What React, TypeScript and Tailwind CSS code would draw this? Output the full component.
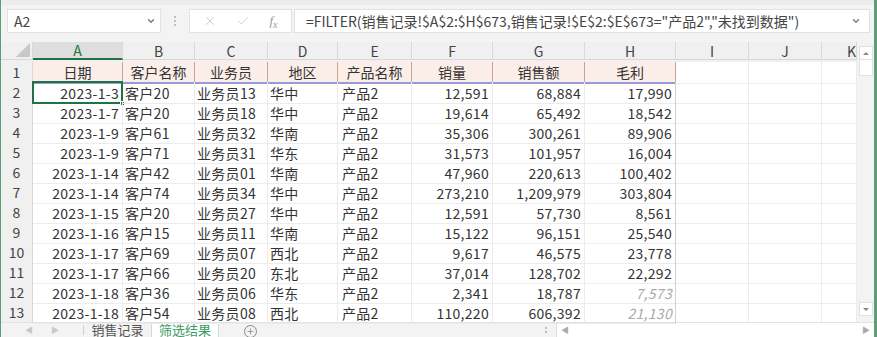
import { ChevronDown, X, Check, Plus } from "lucide-react";

type Row = [string, string, string, string, string, string, string, string];

const rows: Row[] = [
  ["2023-1-3", "客户20", "业务员13", "华中", "产品2", "12,591", "68,884", "17,990"],
  ["2023-1-7", "客户20", "业务员18", "华中", "产品2", "19,614", "65,492", "18,542"],
  ["2023-1-9", "客户61", "业务员32", "华南", "产品2", "35,306", "300,261", "89,906"],
  ["2023-1-9", "客户71", "业务员31", "华东", "产品2", "31,573", "101,957", "16,004"],
  ["2023-1-14", "客户42", "业务员01", "华南", "产品2", "47,960", "220,613", "100,402"],
  ["2023-1-14", "客户74", "业务员34", "华中", "产品2", "273,210", "1,209,979", "303,804"],
  ["2023-1-15", "客户20", "业务员27", "华中", "产品2", "12,591", "57,730", "8,561"],
  ["2023-1-16", "客户15", "业务员11", "华南", "产品2", "15,122", "96,151", "25,540"],
  ["2023-1-17", "客户69", "业务员07", "西北", "产品2", "9,617", "46,575", "23,778"],
  ["2023-1-17", "客户66", "业务员20", "东北", "产品2", "37,014", "128,702", "22,292"],
  ["2023-1-18", "客户36", "业务员06", "华东", "产品2", "2,341", "18,787", "7,573"],
  ["2023-1-18", "客户54", "业务员08", "西北", "产品2", "110,220", "606,392", "21,130"],
];

const headers = ["日期", "客户名称", "业务员", "地区", "产品名称", "销量", "销售额", "毛利"];
const letters = ["A", "B", "C", "D", "E", "F", "G", "H", "I", "J", "K"];
// alignment per data column
const align = ["text-right pr-[3px]", "pl-[2px]", "pl-[2px]", "pl-[2px]", "pl-[4px]", "text-right pr-[3px]", "text-right pr-[3px]", "text-right pr-[3px]"];

const cols = "grid-cols-[32px_90px_72px_73px_70px_74px_81px_92px_91px_73px_73px_35px]";

export default function App() {
  return (
    <div
      className="w-[877px] h-[337px] overflow-hidden bg-white border-l border-r-[3px] border-[#5a9e78] flex flex-col text-[#333]"
      style={{ fontFamily: '"Noto Sans CJK SC", "Noto Sans", sans-serif' }}
    >
      {/* formula bar */}
      <div className="h-[42px] shrink-0 bg-[#f3f3f3] border-t-[5px] border-[#ececec] flex items-start pt-[4px] pl-[6px] pr-[4px]">
        <div className="w-[154px] h-[24px] bg-white border border-[#e2e2e2] flex items-center justify-between pl-[6px] pr-[4px]">
          <span className="text-[14px] text-[#444]">A2</span>
          <ChevronDown className="w-[10px] h-[10px] text-[#777]" strokeWidth={3} />
        </div>
        <div className="w-[28px] h-[24px] flex flex-col items-center justify-center gap-[2px]">
          <span className="w-[2px] h-[2px] bg-[#b0b0b0] rounded-full"></span>
          <span className="w-[2px] h-[2px] bg-[#b0b0b0] rounded-full"></span>
          <span className="w-[2px] h-[2px] bg-[#b0b0b0] rounded-full"></span>
        </div>
        <div className="w-[103px] h-[24px] bg-white border border-[#e2e2e2] flex items-center justify-around px-[4px]">
          <X className="w-[14px] h-[14px] text-[#c8c8c8]" strokeWidth={1.5} />
          <Check className="w-[14px] h-[14px] text-[#c8c8c8]" strokeWidth={1.5} />
          <span className="text-[13px] italic text-[#999]" style={{ fontFamily: '"Liberation Serif", serif' }}>
            f<sub className="text-[10px]">x</sub>
          </span>
        </div>
        <div className="flex-1 h-[24px] ml-[2px] bg-white border border-[#e2e2e2] flex items-center justify-between pl-[11px] pr-[8px]">
          <span className="text-[14px] text-[#444] whitespace-nowrap">
            =FILTER(销售记录!$A$2:$H$673,销售记录!$E$2:$E$673="产品2","未找到数据")
          </span>
          <ChevronDown className="w-[10px] h-[10px] text-[#777]" strokeWidth={3} />
        </div>
      </div>

      {/* sheet */}
      <div className="flex h-[280px] shrink-0">
        <div className="w-[856px] flex flex-col">
          {/* column letters */}
          <div className={`grid ${cols} h-[20px] bg-[#f0f0f0] text-[14px] text-[#444]`}>
            <div className="relative border-r border-b border-[#d8d8d8]">
              <div className="absolute right-[2px] bottom-[2px] w-0 h-0 border-l-[14px] border-l-transparent border-b-[14px] border-b-[#c8c8c8]"></div>
            </div>
            {letters.map((l, i) => (
              <div
                key={l}
                className={`flex items-center leading-none ${i === 10 ? "justify-end" : "justify-center"} ${i === 0 ? "bg-[#dedede] border-b-2 border-b-[#217346] text-[#217346]" : "border-b border-[#d8d8d8]"} border-r border-r-[#d8d8d8]`}
              >
                {l}
              </div>
            ))}
            <div></div>
          </div>

          {/* header row 1 */}
          <div className={`grid ${cols} h-[20px] text-[14px]`}>
            <div className="bg-[#f0f0f0] border-r border-b border-[#d8d8d8] flex items-center justify-center text-[#444]">1</div>
            {headers.map((h) => (
              <div
                key={h}
                className="bg-[#fbeee8] border-r border-r-[#c9a594] border-b-2 border-b-[#9a9ad8] flex items-center justify-center leading-none"
              >
                {h}
              </div>
            ))}
            <div className="border-r border-b border-[#ececec]"></div>
            <div className="border-r border-b border-[#ececec]"></div>
            <div className="border-r border-b border-[#ececec]"></div>
            <div></div>
          </div>

          {/* data rows */}
          {rows.map((r, ri) => (
            <div key={ri} className={`grid ${cols} h-[20px] text-[14px] tracking-[0.3px]`}>
              <div className="bg-[#f0f0f0] border-r border-b border-[#d8d8d8] flex items-center justify-center text-[#444] tracking-normal">
                {ri + 2}
              </div>
              {r.map((v, ci) => {
                const selected = ri === 0 && ci === 0;
                const faded = ci === 7 && ri >= 10;
                return (
                  <div
                    key={ci}
                    className={`relative flex items-center whitespace-nowrap leading-none border-b border-[#ececec] ${ci === 7 ? "border-r border-r-[#d0d0d0]" : "border-r border-r-[#ececec]"} ${align[ci]} ${align[ci].startsWith("text-right") ? "justify-end" : ""} ${faded ? "text-[#aaa] italic" : ""}`}
                  >
                    {v}
                    {selected && (
                      <>
                        <div className="absolute -left-px -top-px -right-px -bottom-px border-2 border-[#217346]"></div>
                        <div className="absolute -right-[3px] -bottom-[3px] w-[5px] h-[5px] bg-[#217346] border border-white"></div>
                      </>
                    )}
                  </div>
                );
              })}
              <div className="border-r border-b border-[#ececec]"></div>
              <div className="border-r border-b border-[#ececec]"></div>
              <div className="border-r border-b border-[#ececec]"></div>
              <div></div>
            </div>
          ))}
        </div>

        {/* vertical scrollbar */}
        <div className="w-[18px] bg-[#f3f3f3] flex flex-col justify-between pl-[2px] pt-[4px] pb-[6px]">
          <div className="w-[14px] flex flex-col">
            <div className="h-[14px] bg-white border border-[#e0e0e0] flex items-center justify-center">
              <div className="w-0 h-0 border-l-[3px] border-r-[3px] border-b-[3px] border-l-transparent border-r-transparent border-b-[#888]"></div>
            </div>
            <div className="h-[16px] bg-white border border-t-0 border-[#e0e0e0]"></div>
          </div>
          <div className="h-[14px] w-[14px] bg-white border border-[#e0e0e0] flex items-center justify-center">
            <div className="w-0 h-0 border-l-[3px] border-r-[3px] border-t-[3px] border-l-transparent border-r-transparent border-t-[#888]"></div>
          </div>
        </div>
      </div>

      {/* sheet tabs */}
      <div className="h-[15px] shrink-0 bg-[#f3f3f3] flex items-stretch border-t border-[#e2e2e2]">
        <div className="w-[82px] flex items-center justify-center gap-[18px] text-[#c8c8c8] text-[8px] leading-none">
          <span>◀</span>
          <span>▶</span>
        </div>
        <div className="w-px bg-[#d0d0d0] my-[2px]"></div>
        <div className="w-[67px] text-center text-[13px] leading-[14px] text-[#555] whitespace-nowrap">销售记录</div>
        <div className="w-[68px] bg-white border-x border-[#d8d8d8] text-center text-[13px] leading-[14px] text-[#3c9a63] whitespace-nowrap">筛选结果</div>
        <div className="w-[62px] flex items-start justify-center pt-[2px]">
          <div className="w-[13px] h-[13px] rounded-full border border-[#888] flex items-center justify-center">
            <Plus className="w-[9px] h-[9px] text-[#666]" strokeWidth={1.5} />
          </div>
        </div>
        <div className="flex-1"></div>
        <div className="w-[20px] flex flex-col items-center justify-center gap-[2px]">
          <span className="w-[2px] h-[2px] bg-[#b0b0b0] rounded-full"></span>
          <span className="w-[2px] h-[2px] bg-[#b0b0b0] rounded-full"></span>
        </div>
        <div className="w-[318px] bg-white border-l border-[#e0e0e0] flex items-center justify-between px-[4px]">
          <span className="text-[8px] text-[#aaa] leading-none">◀</span>
          <span className="text-[8px] text-[#aaa] leading-none">▶</span>
        </div>
      </div>
    </div>
  );
}
